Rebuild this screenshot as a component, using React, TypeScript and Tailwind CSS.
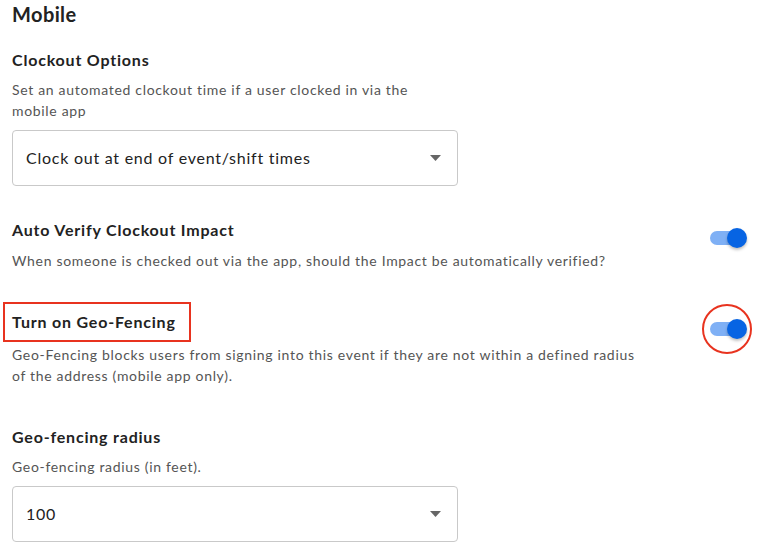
import React, { useState } from 'react';

const font = { fontFamily: 'Lato, "Open Sans", sans-serif' };

const Toggle = ({ on, onChange }: { on: boolean; onChange: () => void }) => (
  <button onClick={onChange} className="relative w-[38px] h-[20px] shrink-0">
    <span
      className={`absolute left-0 top-[3px] h-[14px] w-[34px] rounded-full ${on ? 'bg-[#7fb0f5]' : 'bg-[#bdbdbd]'}`}
    />
    <span
      className={`absolute top-0 h-[20px] w-[20px] rounded-full shadow-[0_2px_3px_rgba(0,0,0,0.25)] ${on ? 'left-[17px] bg-[#0764e3]' : 'left-0 bg-white'}`}
    />
  </button>
);

const Select = ({ value }: { value: string }) => (
  <div className="flex items-center justify-between w-[446px] h-[56px] border border-[#c9c9c9] rounded-[4px] pl-[13px] pr-[16px]">
    <span className="text-[16px] text-[#222] tracking-[0.75px]">{value}</span>
    <svg width="11" height="6" viewBox="0 0 11 6">
      <path d="M0 0h11L5.5 6z" fill="#666" />
    </svg>
  </div>
);

const Title = ({ children }: { children: React.ReactNode }) => (
  <h3 className="text-[16px] font-bold text-[#222] leading-[22px] tracking-[0.8px]">{children}</h3>
);

export default function App() {
  const [autoVerify, setAutoVerify] = useState(true);
  const [geo, setGeo] = useState(true);

  return (
    <div className="bg-white w-[768px] h-[558px] overflow-hidden pl-[12px] pr-[20px]" style={font}>
      <h2 className="text-[20px] font-bold text-[#222] leading-[28px] tracking-[0.4px]">Mobile</h2>

      <div className="mt-[21px]">
        <Title>Clockout Options</Title>
        <p className="mt-[8px] text-[14px] text-[#555] leading-[21px] tracking-[0.68px]">
          Set an automated clockout time if a user clocked in via the
          <br />
          mobile app
        </p>
        <div className="mt-[9px]">
          <Select value="Clock out at end of event/shift times" />
        </div>
      </div>

      <div className="mt-[33px] flex justify-between">
        <div>
          <Title>Auto Verify Clockout Impact</Title>
          <p className="mt-[9px] text-[14px] text-[#555] leading-[21px] tracking-[0.68px]">
            When someone is checked out via the app, should the Impact be automatically verified?
          </p>
        </div>
        <div className="mt-[9px]">
          <Toggle on={autoVerify} onChange={() => setAutoVerify(!autoVerify)} />
        </div>
      </div>

      <div className="mt-[39px] flex justify-between">
        <div>
          <div className="relative inline-block">
            <Title>Turn on Geo-Fencing</Title>
            <span className="absolute left-[-9px] top-[-9px] w-[188px] h-[40px] border-2 border-[#e8331f] pointer-events-none" />
          </div>
          <p className="mt-[10px] text-[14px] text-[#555] leading-[21px] tracking-[0.68px]">
            Geo-Fencing blocks users from signing into this event if they are not within a defined radius
            <br />
            of the address (mobile app only).
          </p>
        </div>
        <div className="mt-[9px] relative">
          <Toggle on={geo} onChange={() => setGeo(!geo)} />
          <span className="absolute left-[-8px] top-[-15px] w-[50px] h-[50px] rounded-full border-2 border-[#e8331f] pointer-events-none" />
        </div>
      </div>

      <div className="mt-[40px]">
        <Title>Geo-fencing radius</Title>
        <p className="mt-[8px] text-[14px] text-[#555] leading-[21px] tracking-[0.68px]">Geo-fencing radius (in feet).</p>
        <div className="mt-[9px]">
          <Select value="100" />
        </div>
      </div>
    </div>
  );
}
